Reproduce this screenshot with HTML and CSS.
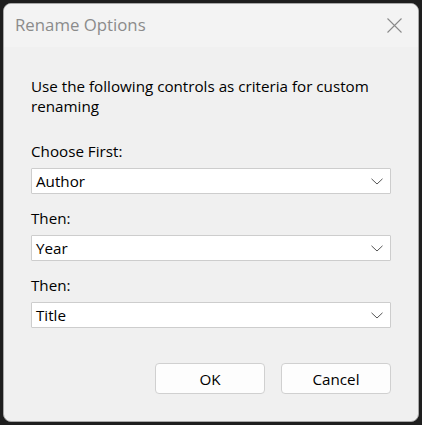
FILE: index.html
```html
<!DOCTYPE html>
<html>
<head>
<meta charset="utf-8">
<link rel="stylesheet" href="styles.css">
</head>
<body>
<div class="window">
  <div class="titlebar">
    <span class="title">Rename Options</span>
    <svg class="close" width="15" height="15" viewBox="0 0 15 15"><path d="M0.5 0.5 L14.5 14.5 M14.5 0.5 L0.5 14.5" stroke="#8a8a8a" stroke-width="1.1" fill="none"/></svg>
  </div>
  <div class="content">
    <p class="desc">Use the following controls as criteria for custom renaming</p>
    <div class="field">
      <div class="label">Choose First:</div>
      <div class="combo"><span>Author</span><svg class="chev" width="12" height="7" viewBox="0 0 12 7"><path d="M0.5 0.8 L6 6 L11.5 0.8" stroke="#555" stroke-width="1" fill="none"/></svg></div>
    </div>
    <div class="field">
      <div class="label">Then:</div>
      <div class="combo"><span>Year</span><svg class="chev" width="12" height="7" viewBox="0 0 12 7"><path d="M0.5 0.8 L6 6 L11.5 0.8" stroke="#555" stroke-width="1" fill="none"/></svg></div>
    </div>
    <div class="field">
      <div class="label">Then:</div>
      <div class="combo"><span>Title</span><svg class="chev" width="12" height="7" viewBox="0 0 12 7"><path d="M0.5 0.8 L6 6 L11.5 0.8" stroke="#555" stroke-width="1" fill="none"/></svg></div>
    </div>
    <div class="buttons">
      <div class="btn">OK</div>
      <div class="btn">Cancel</div>
    </div>
  </div>
</div>
</body>
</html>
```
FILE: styles.css
```css
html, body {
  margin: 0;
  padding: 0;
  background: #1e1e1e;
  width: 422px;
  height: 425px;
  overflow: hidden;
}
body {
  font-family: "Open Sans", "Noto Sans", "DejaVu Sans", sans-serif;
  font-size: 15.2px;
  color: #000;
}
.window {
  box-sizing: border-box;
  margin: 3px 0 0 3px;
  width: 416px;
  height: 419px;
  border: 1px solid #a8a8a8;
  border-radius: 8px;
  background: #f0f0f0;
  overflow: hidden;
  display: flex;
  flex-direction: column;
}
.titlebar {
  height: 43px;
  flex: none;
  background: #f3f3f3;
  display: flex;
  align-items: center;
  justify-content: space-between;
  padding: 0 16px 0 11px;
}
.title {
  font-size: 16.8px;
  color: #8b8b8b;
  margin-top: -2px;
}
.close {
  display: block;
  margin-top: -1px;
}
.content {
  flex: 1;
  display: flex;
  flex-direction: column;
  padding: 29px 27px 0 27px;
}
.desc {
  margin: 0 0 25px 0;
  line-height: 20px;
}
.field {
  display: flex;
  flex-direction: column;
  gap: 7px;
  margin-bottom: 14px;
}
.label {
  line-height: 20px;
}
.combo {
  box-sizing: border-box;
  height: 26px;
  background: #fff;
  border: 1px solid #cdcdcd;
  border-radius: 1px;
  display: flex;
  align-items: center;
  justify-content: space-between;
  padding: 0 7px 0 4px;
}
.chev {
  display: block;
  margin-top: 1px;
}
.buttons {
  display: flex;
  justify-content: flex-end;
  gap: 16px;
  margin-top: 21px;
}
.btn {
  box-sizing: border-box;
  width: 110px;
  height: 31px;
  background: #fdfdfd;
  border: 1px solid #d0d0d0;
  border-radius: 4px;
  display: flex;
  align-items: center;
  justify-content: center;
}
```
